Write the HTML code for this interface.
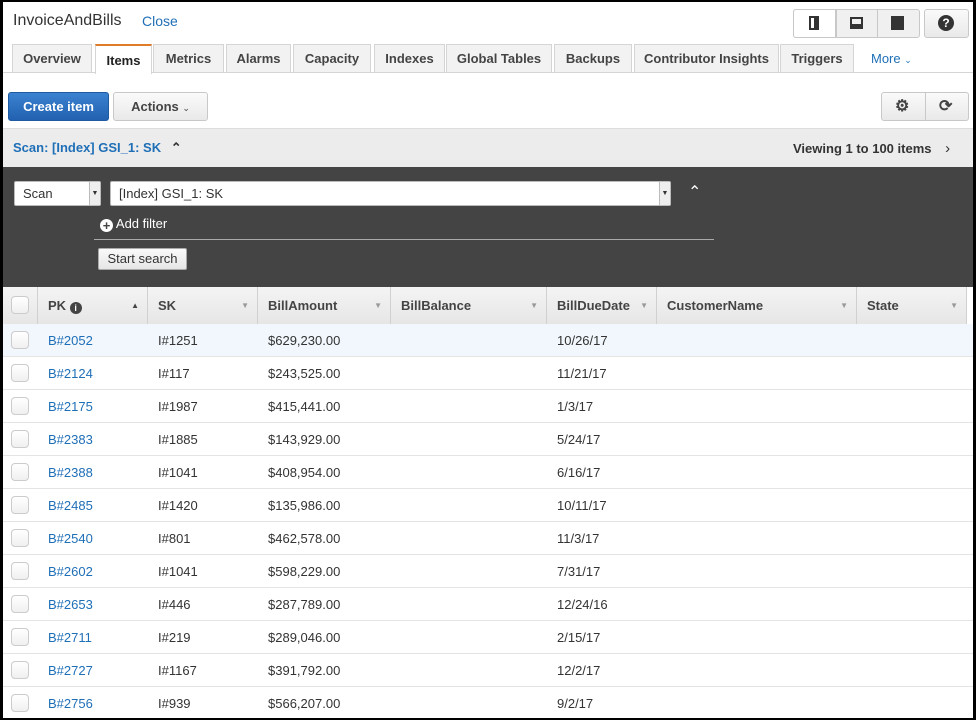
<!DOCTYPE html>
<html><head><meta charset="utf-8"><style>
*{box-sizing:border-box;margin:0;padding:0}
body{width:976px;height:720px;overflow:hidden;background:#000;font-family:"Liberation Sans",Arial,sans-serif;font-size:13px;color:#333}
#w{position:absolute;left:3px;top:2px;width:970px;height:716px;background:#fff;overflow:hidden}
.a{position:absolute}
.tab{position:absolute;top:42px;height:28px;background:#f2f2f2;border:1px solid #d5d5d5;border-bottom:none;font-weight:bold;font-size:13px;color:#444;text-align:center;line-height:28px}
.btn{position:absolute;border:1px solid #c8c8c8;border-radius:3px;background:linear-gradient(#fafafa,#e9e9e9);font-weight:bold;color:#444;text-align:center}
.hd{position:absolute;top:285px;height:37px;background:linear-gradient(#f4f4f4,#e6e6e6);border-right:1px solid #d0d0d0;font-weight:bold;color:#444;line-height:37px;padding-left:10px}
.hd i{position:absolute;right:8px;top:0;font-style:normal;font-size:8px;color:#999}
.row{position:absolute;left:0;width:970px;height:33px;border-bottom:1px solid #e4e4e4;line-height:34px}
.row span{position:absolute}
.cb{position:absolute;left:8px;top:7px;width:18px;height:18px;border:1px solid #ccc;border-radius:4px;background:linear-gradient(#fff,#f0f0f0)}
.pk{left:45px;color:#1f6fb7}
</style></head><body><div id="w">
<div class="a" style="left:10px;top:10px;font-size:16px;color:#333">InvoiceAndBills</div>
<div class="a" style="left:139px;top:11px;font-size:14px;color:#1f6fb7">Close</div>
<div class="btn" style="left:790px;top:7px;width:127px;height:29px;background:#f0f0f0"></div>
<div class="a" style="left:790px;top:7px;width:43px;height:29px;border:1px solid #c8c8c8;border-radius:3px 0 0 3px;background:#fff"></div>
<div class="a" style="left:806px;top:14px;width:10px;height:14px;border:2px solid #333;border-right-width:5px"></div>
<div class="a" style="left:847px;top:15px;width:13px;height:12px;border:2px solid #333;border-bottom-width:5px"></div>
<div class="a" style="left:874px;top:7px;width:1px;height:29px;background:#c8c8c8"></div>
<div class="a" style="left:833px;top:7px;width:1px;height:29px;background:#c8c8c8"></div>
<div class="a" style="left:888px;top:14px;width:13px;height:14px;background:#333"></div>
<div class="btn" style="left:921px;top:7px;width:45px;height:29px"></div>
<div class="a" style="left:935px;top:13px;width:16px;height:16px;border-radius:50%;background:#333;color:#fff;font-weight:bold;font-size:12px;text-align:center;line-height:16px">?</div>
<div class="a" style="left:0;top:70px;width:970px;height:1px;background:#d5d5d5"></div>
<div class="tab" style="left:9px;width:80px">Overview</div>
<div class="tab" style="left:92px;width:57px;top:42px;height:30px;background:#fff;border-top:2px solid #e07b28;line-height:30px;color:#222">Items</div>
<div class="tab" style="left:150px;width:71px">Metrics</div>
<div class="tab" style="left:223px;width:65px">Alarms</div>
<div class="tab" style="left:290px;width:78px">Capacity</div>
<div class="tab" style="left:371px;width:71px">Indexes</div>
<div class="tab" style="left:443px;width:106px">Global Tables</div>
<div class="tab" style="left:551px;width:78px">Backups</div>
<div class="tab" style="left:631px;width:145px">Contributor Insights</div>
<div class="tab" style="left:777px;width:74px">Triggers</div>
<div class="a" style="left:868px;top:49px;font-size:13px;color:#1f6fb7">More <span style="font-size:9px">&#8964;</span></div>
<div class="a" style="left:5px;top:90px;width:101px;height:29px;border-radius:3px;background:linear-gradient(#3a82d0,#2261b0);border:1px solid #1e5aa0;color:#fff;font-weight:bold;text-align:center;line-height:27px">Create item</div>
<div class="btn" style="left:110px;top:90px;width:95px;height:29px;line-height:27px">Actions <span style="font-size:9px;font-weight:normal">&#8964;</span></div>
<div class="btn" style="left:878px;top:90px;width:88px;height:29px;line-height:27px;font-size:16px"><span style="position:absolute;left:13px;top:0">&#9881;</span><span style="position:absolute;left:43px;top:0;width:1px;height:27px;background:#c8c8c8"></span><span style="position:absolute;left:57px;top:0">&#10227;</span></div>
<div class="a" style="left:0;top:126px;width:970px;height:39px;background:#ececec;border-top:1px solid #ddd"></div>
<div class="a" style="left:10px;top:138px;color:#1f6fb7;font-weight:bold">Scan: [Index] GSI_1: SK <span style="color:#333;margin-left:6px">&#8963;</span></div>
<div class="a" style="left:790px;top:138px;font-weight:bold;color:#333">Viewing 1 to 100 items <span style="margin-left:10px;font-weight:normal;font-size:15px">&#8250;</span></div>
<div class="a" style="left:0;top:165px;width:970px;height:120px;background:#444"></div>
<div class="a" style="left:11px;top:179px;width:87px;height:25px;background:#fff;border:1px solid #bbb;border-radius:2px;padding-left:8px;line-height:23px">Scan<span style="position:absolute;right:0;top:0;width:11px;height:23px;background:#eee;border-left:1px solid #bbb;font-size:7px;text-align:center">&#9660;</span></div>
<div class="a" style="left:107px;top:179px;width:561px;height:25px;background:#fff;border:1px solid #bbb;border-radius:2px;padding-left:8px;line-height:23px">[Index] GSI_1: SK<span style="position:absolute;right:0;top:0;width:11px;height:23px;background:#eee;border-left:1px solid #bbb;font-size:7px;text-align:center">&#9660;</span></div>
<div class="a" style="left:685px;top:180px;color:#fff;font-size:16px">&#8963;</div>
<div class="a" style="left:97px;top:214px;color:#fff"><span style="display:inline-block;width:13px;height:13px;border-radius:50%;background:#fff;color:#444;font-weight:bold;text-align:center;line-height:13px;font-size:13px;vertical-align:-2px">+</span> Add filter</div>
<div class="a" style="left:91px;top:237px;width:620px;height:1px;background:#aaa"></div>
<div class="a" style="left:95px;top:246px;width:89px;height:22px;background:linear-gradient(#fafafa,#e6e6e6);border:1px solid #aaa;border-radius:2px;text-align:center;line-height:20px;color:#333">Start search</div>
<div class="hd" style="left:0;width:35px"><span class="cb" style="top:9px"></span></div>
<div class="hd" style="left:35px;width:110px">PK <span style="display:inline-block;width:12px;height:12px;border-radius:50%;background:#444;color:#fff;font-size:9px;text-align:center;line-height:12px;vertical-align:-1px">i</span><i style="color:#444">&#9650;</i></div>
<div class="hd" style="left:145px;width:110px">SK<i>&#9660;</i></div>
<div class="hd" style="left:255px;width:133px">BillAmount<i>&#9660;</i></div>
<div class="hd" style="left:388px;width:156px">BillBalance<i>&#9660;</i></div>
<div class="hd" style="left:544px;width:110px">BillDueDate<i>&#9660;</i></div>
<div class="hd" style="left:654px;width:200px">CustomerName<i>&#9660;</i></div>
<div class="hd" style="left:854px;width:110px">State<i>&#9660;</i></div>
<div class="a" style="left:964px;top:285px;width:6px;height:37px;background:#fff"></div>
<div class="row" style="top:322px;background:#f1f7fc"><span class="cb"></span><span class="pk">B#2052</span><span style="left:155px">I#1251</span><span style="left:265px">$629,230.00</span><span style="left:554px">10/26/17</span></div>
<div class="row" style="top:355px"><span class="cb"></span><span class="pk">B#2124</span><span style="left:155px">I#117</span><span style="left:265px">$243,525.00</span><span style="left:554px">11/21/17</span></div>
<div class="row" style="top:388px"><span class="cb"></span><span class="pk">B#2175</span><span style="left:155px">I#1987</span><span style="left:265px">$415,441.00</span><span style="left:554px">1/3/17</span></div>
<div class="row" style="top:421px"><span class="cb"></span><span class="pk">B#2383</span><span style="left:155px">I#1885</span><span style="left:265px">$143,929.00</span><span style="left:554px">5/24/17</span></div>
<div class="row" style="top:454px"><span class="cb"></span><span class="pk">B#2388</span><span style="left:155px">I#1041</span><span style="left:265px">$408,954.00</span><span style="left:554px">6/16/17</span></div>
<div class="row" style="top:487px"><span class="cb"></span><span class="pk">B#2485</span><span style="left:155px">I#1420</span><span style="left:265px">$135,986.00</span><span style="left:554px">10/11/17</span></div>
<div class="row" style="top:520px"><span class="cb"></span><span class="pk">B#2540</span><span style="left:155px">I#801</span><span style="left:265px">$462,578.00</span><span style="left:554px">11/3/17</span></div>
<div class="row" style="top:553px"><span class="cb"></span><span class="pk">B#2602</span><span style="left:155px">I#1041</span><span style="left:265px">$598,229.00</span><span style="left:554px">7/31/17</span></div>
<div class="row" style="top:586px"><span class="cb"></span><span class="pk">B#2653</span><span style="left:155px">I#446</span><span style="left:265px">$287,789.00</span><span style="left:554px">12/24/16</span></div>
<div class="row" style="top:619px"><span class="cb"></span><span class="pk">B#2711</span><span style="left:155px">I#219</span><span style="left:265px">$289,046.00</span><span style="left:554px">2/15/17</span></div>
<div class="row" style="top:652px"><span class="cb"></span><span class="pk">B#2727</span><span style="left:155px">I#1167</span><span style="left:265px">$391,792.00</span><span style="left:554px">12/2/17</span></div>
<div class="row" style="top:685px;border:none"><span class="cb"></span><span class="pk">B#2756</span><span style="left:155px">I#939</span><span style="left:265px">$566,207.00</span><span style="left:554px">9/2/17</span></div>
</div></body></html>
